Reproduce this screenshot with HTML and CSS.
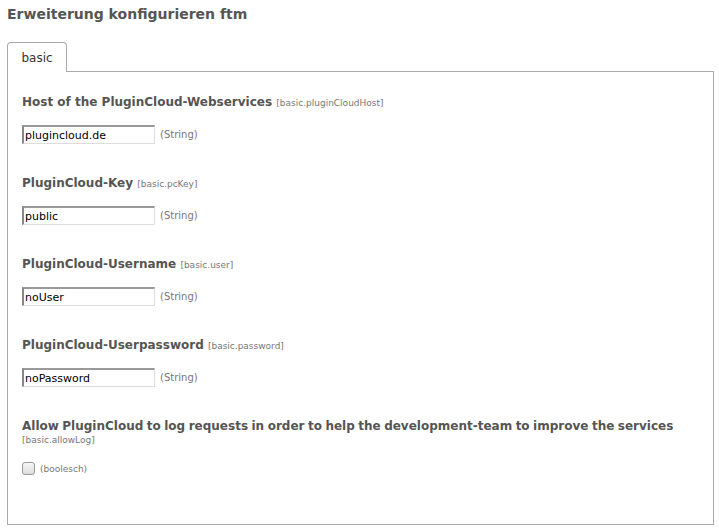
FILE: index.html
```html
<!DOCTYPE html>
<html>
<head>
<meta charset="utf-8">
<link rel="stylesheet" href="styles.css">
</head>
<body>
<h1 class="title">Erweiterung konfigurieren ftm</h1>
<div class="tabs">
  <div class="tab">basic</div>
  <div class="tab-rest"></div>
</div>
<div class="panel">
  <div class="field">
    <div class="label">Host of the PluginCloud-Webservices <span class="key">[basic.pluginCloudHost]</span></div>
    <div class="row"><div class="input">plugincloud.de</div><span class="type">(String)</span></div>
  </div>
  <div class="field">
    <div class="label">PluginCloud-Key <span class="key">[basic.pcKey]</span></div>
    <div class="row"><div class="input">public</div><span class="type">(String)</span></div>
  </div>
  <div class="field">
    <div class="label">PluginCloud-Username <span class="key">[basic.user]</span></div>
    <div class="row"><div class="input">noUser</div><span class="type">(String)</span></div>
  </div>
  <div class="field">
    <div class="label">PluginCloud-Userpassword <span class="key">[basic.password]</span></div>
    <div class="row"><div class="input">noPassword</div><span class="type">(String)</span></div>
  </div>
  <div class="field last">
    <div class="label long">Allow PluginCloud to log requests in order to help the development-team to improve the services</div>
    <div class="key block">[basic.allowLog]</div>
    <div class="row check-row"><span class="checkbox"></span><span class="type small">(boolesch)</span></div>
  </div>
</div>
</body>
</html>
```
FILE: styles.css
```css
html, body { margin: 0; padding: 0; background: #fff; }
body {
  font-family: "DejaVu Sans", Verdana, sans-serif;
  color: #555;
  padding: 0 5px 0 7px;
}
.title {
  margin: 0;
  padding-top: 5px;
  height: 37px;
  font-size: 14px;
  font-weight: bold;
  color: #555;
  line-height: 18px;
}
.tabs {
  display: flex;
  align-items: flex-end;
}
.tab {
  width: 58px;
  height: 29px;
  border: 1px solid #aaa;
  border-bottom: none;
  border-radius: 4px 4px 0 0;
  font-size: 12px;
  color: #333;
  line-height: 31px;
  text-align: center;
  box-sizing: content-box;
}
.tab-rest {
  flex: 1;
  border-bottom: 1px solid #aaa;
}
.panel {
  border: 1px solid #aaa;
  border-top: none;
  height: 453px;
  padding: 22px 14px 0 14px;
  box-sizing: border-box;
}
.field { height: 81px; }
.label {
  font-size: 12px;
  font-weight: bold;
  color: #555;
  line-height: 16px;
  height: 22px;
}
.label.long { word-spacing: -0.7px; }
.key {
  font-size: 9px;
  font-weight: normal;
  color: #777;
  word-spacing: 0;
}
.key.block { line-height: 12px; margin-top: -6px; height: 20px; }
.row {
  display: flex;
  align-items: center;
  gap: 5px;
  margin-top: 9px;
}
.input {
  width: 129px;
  height: 16px;
  border-style: solid;
  border-width: 2px 1px 1px 2px;
  border-color: #999 #ddd #ddd #888;
  font-size: 11px;
  color: #000;
  line-height: 17px;
  padding: 0 0 0 1px;
}
.type {
  font-size: 10px;
  color: #777;
}
.type.small { font-size: 9px; line-height: 11px; }
.check-row { margin-top: 8px; gap: 5px; align-items: flex-end; }
.checkbox {
  width: 11px;
  height: 11px;
  border: 1px solid #999;
  border-radius: 3px;
  background: linear-gradient(#f6f6f6, #dcdcdc);
}
```
